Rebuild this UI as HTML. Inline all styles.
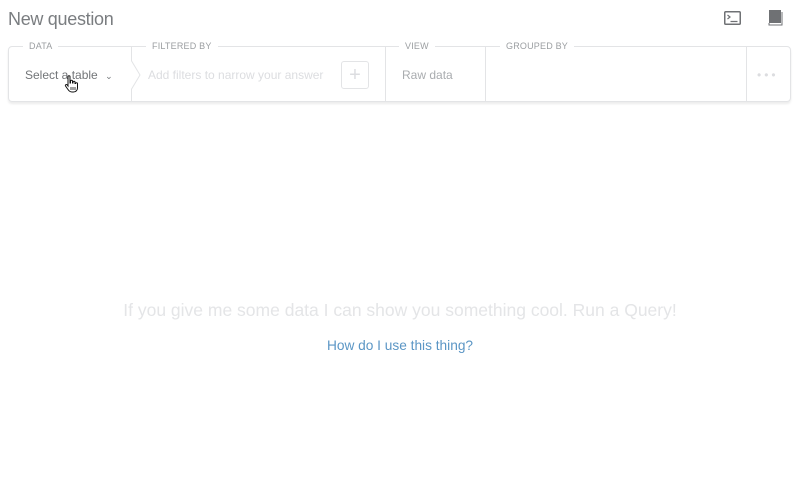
<!DOCTYPE html>
<html><head><meta charset="utf-8"><style>
*{margin:0;padding:0;box-sizing:border-box}
body{width:800px;height:500px;background:#fff;font-family:"Liberation Sans",sans-serif;position:relative;overflow:hidden}
.t{position:absolute;left:8px;top:9px;font-size:18px;color:#7a7d80;letter-spacing:-0.3px}
.box{position:absolute;left:8px;top:46px;width:783px;height:56px;border:1px solid #e3e4e6;border-radius:4px;box-shadow:0 2px 2px rgba(0,0,0,0.08)}
.div{position:absolute;top:46px;height:56px;width:1px;background:#e3e4e6}
.lbl{position:absolute;top:41px;font-size:9px;color:#9b9ea1;background:#fff;padding:0 6px;letter-spacing:0.2px}
.v{position:absolute;top:68px;font-size:12px}
.msg{position:absolute;top:300px;width:800px;text-align:center;font-size:17.5px;color:#e4e5e7}
.lnk{position:absolute;top:338px;width:800px;text-align:center;font-size:13.7px;color:#5b96c5}
</style></head><body>
<div class="t">New question</div>
<svg style="position:absolute;left:724px;top:11px" width="17" height="14"><rect x="0.75" y="0.75" width="15.5" height="12.5" rx="1" fill="none" stroke="#6f7174" stroke-width="1.5"/><path d="M3.5 4l2.5 2-2.5 2M6.5 10.5h7" stroke="#6f7174" stroke-width="1.2" fill="none"/></svg>
<svg style="position:absolute;left:768px;top:10px" width="15" height="16"><rect x="1" y="0" width="12" height="13" fill="#6f7174"/><path d="M1 13v2h13V2" stroke="#6f7174" stroke-width="1" fill="none"/></svg>
<div class="box"></div>
<div class="div" style="left:131px"></div>
<div class="div" style="left:385px"></div>
<div class="div" style="left:485px"></div>
<div class="div" style="left:746px"></div>
<svg style="position:absolute;left:131px;top:60px" width="12" height="30"><path d="M0 0L9 15 0 30" stroke="#e3e4e6" fill="#fff"/></svg>
<div class="lbl" style="left:23px">DATA</div>
<div class="lbl" style="left:146px">FILTERED BY</div>
<div class="lbl" style="left:399px">VIEW</div>
<div class="lbl" style="left:500px">GROUPED BY</div>
<div class="v" style="left:25px;color:#727578">Select a table <span style="font-size:9px;margin-left:4px">&#8964;</span></div>
<div class="v" style="left:148px;color:#dcdde0">Add filters to narrow your answer</div>
<div style="position:absolute;left:341px;top:61px;width:28px;height:28px;border:1px solid #e3e4e6;border-radius:3px;color:#dcdde0;font-size:20px;text-align:center;line-height:26px">+</div>
<div class="v" style="left:402px;color:#a9acaf">Raw data</div>
<div style="position:absolute;left:757px;top:68px;font-size:12px;color:#dcdde0;letter-spacing:3px">•••</div>
<svg style="position:absolute;left:64px;top:75px" width="16" height="19"><path d="M4 1.5c0-1 2-1 2 0V8h0.5V6c0-1 2-1 2 0v2h0.5V7c0-1 2-1 2 0v1.5h0.5c0-1 2-1 2 0V13c0 2-1.5 4-4 4H8c-2 0-3-1-4-2.5L1.5 11c-.6-1 .6-2 1.6-1.2L4 11z" fill="#fff" stroke="#111" stroke-width="1"/><path d="M7 12v3M9 12v3M11 12v3" stroke="#111" stroke-width="0.8"/></svg>
<div class="msg">If you give me some data I can show you something cool. Run a Query!</div>
<div class="lnk">How do I use this thing?</div>
</body></html>
